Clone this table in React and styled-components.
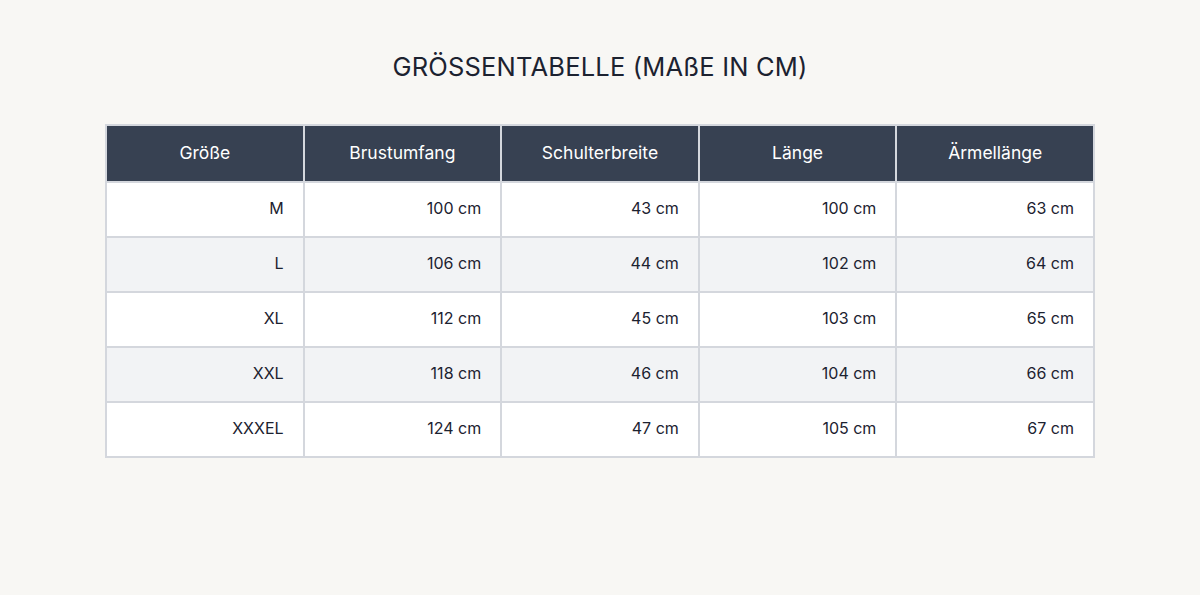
import React from "react";
import styled, { createGlobalStyle } from "styled-components";

const Global = createGlobalStyle`
  html, body { margin: 0; padding: 0; background: #f8f7f4; }
  body { font-family: Inter, "Open Sans", sans-serif; color: #1c2230; }
`;

const Page = styled.div`
  width: 1200px;
  height: 595px;
  box-sizing: border-box;
  padding: 51px 105px 0;
  display: flex;
  flex-direction: column;
  align-items: center;
`;

const Title = styled.h1`
  margin: 0 0 41px;
  font-family: Inter, sans-serif;
  font-weight: 400;
  font-size: 25.5px;
  line-height: 32px;
  letter-spacing: 0.2px;
  color: #1c2230;
`;

const Table = styled.table`
  width: 990px;
  border-collapse: collapse;
  table-layout: fixed;
  font-family: Inter, sans-serif;
  font-size: 16px;
`;

const Th = styled.th`
  background: #374152;
  color: #ffffff;
  font-weight: 400;
  font-size: 17.5px;
  height: 57px;
  padding: 0 20px 3px;
  text-align: center;
  border: 2px solid #d4d7dd;
  box-sizing: border-box;
`;

const Row = styled.tr`
  background: ${(p) => (p.$alt ? "#f2f3f5" : "#ffffff")};
`;

const Td = styled.td`
  height: 55px;
  padding: 0 19px 3px;
  text-align: right;
  border: 2px solid #d4d7dd;
  color: #1c2230;
  box-sizing: border-box;
`;

const headers = ["Größe", "Brustumfang", "Schulterbreite", "Länge", "Ärmellänge"];
const rows = [
  ["M", "100 cm", "43 cm", "100 cm", "63 cm"],
  ["L", "106 cm", "44 cm", "102 cm", "64 cm"],
  ["XL", "112 cm", "45 cm", "103 cm", "65 cm"],
  ["XXL", "118 cm", "46 cm", "104 cm", "66 cm"],
  ["XXXEL", "124 cm", "47 cm", "105 cm", "67 cm"],
];

export default function App() {
  return (
    <>
      <Global />
      <Page>
        <Title>GRÖSSENTABELLE (MAßE IN CM)</Title>
        <Table>
          <thead>
            <tr>
              {headers.map((h) => (
                <Th key={h}>{h}</Th>
              ))}
            </tr>
          </thead>
          <tbody>
            {rows.map((r, i) => (
              <Row key={r[0]} $alt={i % 2 === 1}>
                {r.map((c, j) => (
                  <Td key={j}>{c}</Td>
                ))}
              </Row>
            ))}
          </tbody>
        </Table>
      </Page>
    </>
  );
}
